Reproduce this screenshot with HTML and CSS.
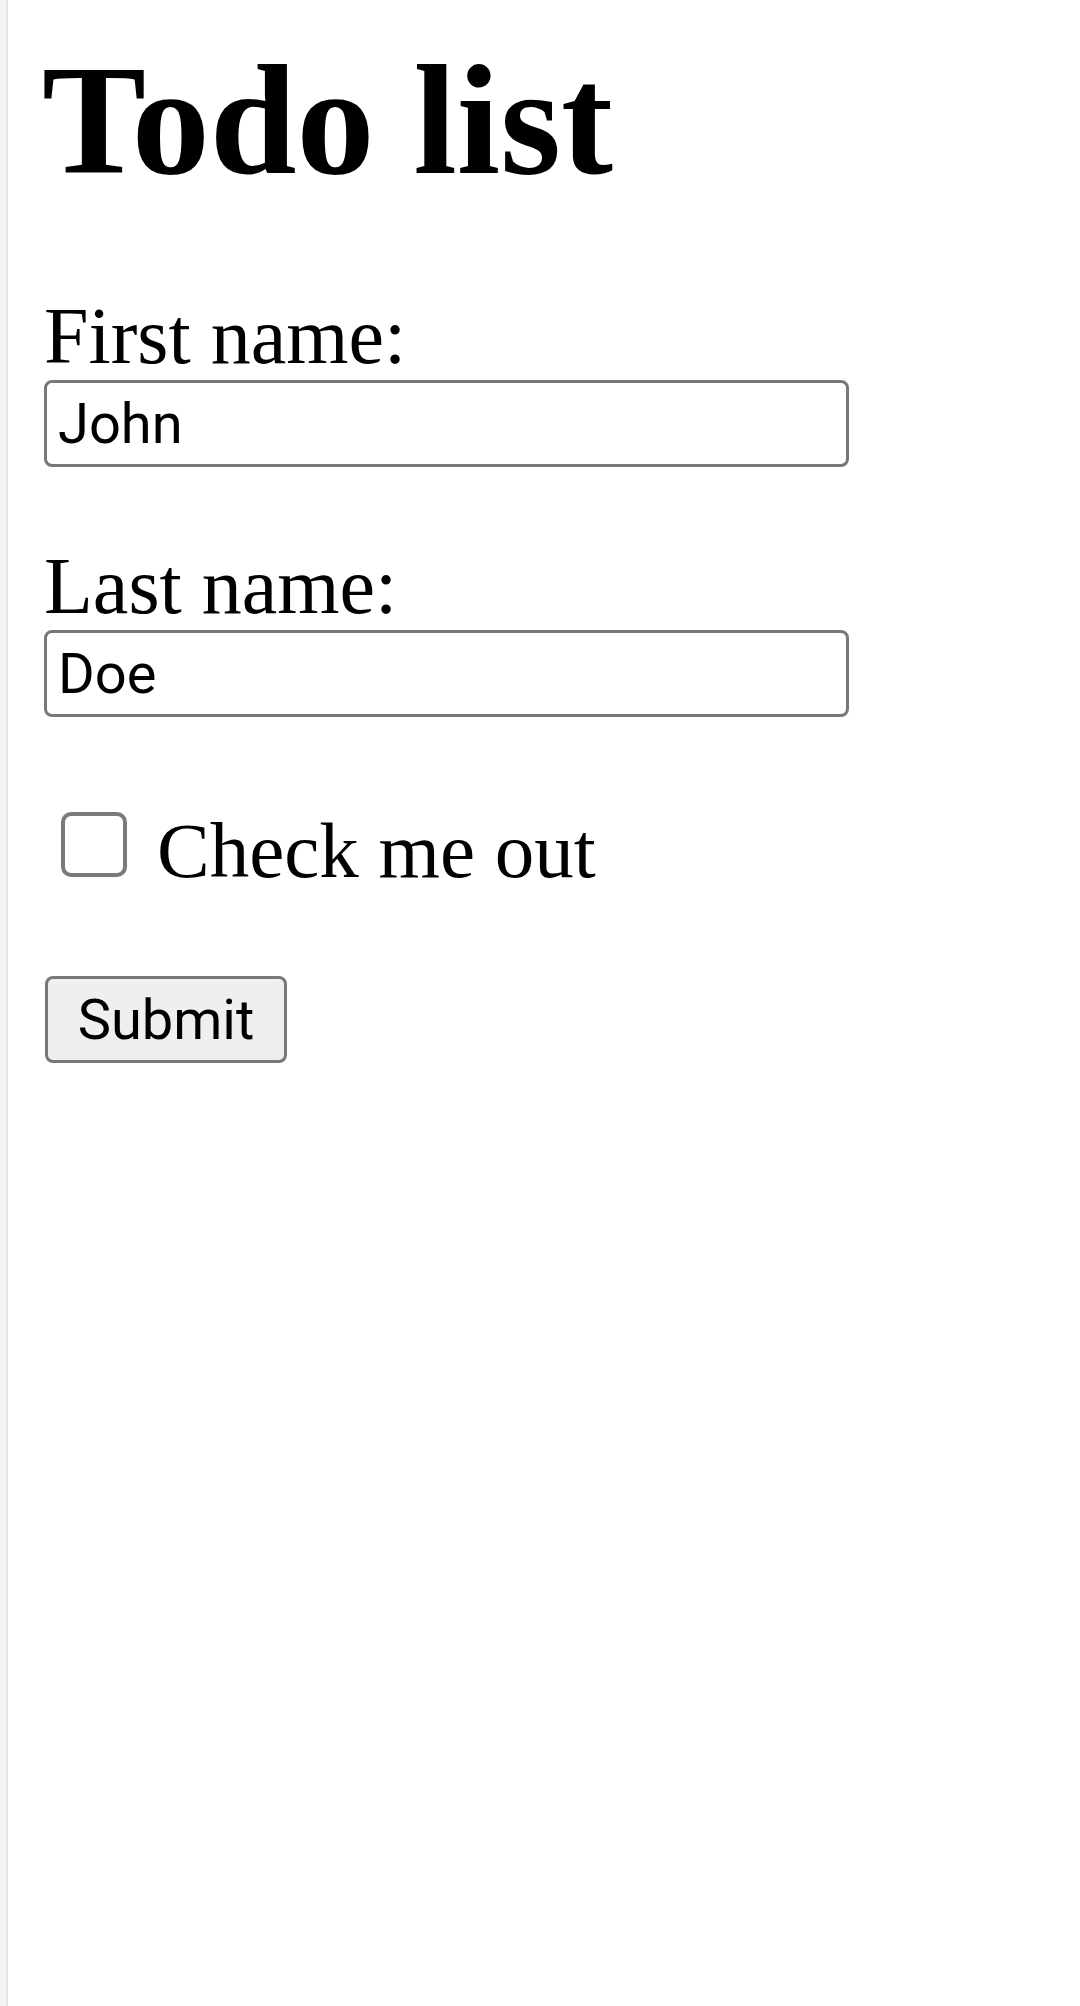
FILE: index.html
```html
<!DOCTYPE html>
<html lang="en">
<head>
<meta charset="utf-8">
<title>Todo list</title>
<link rel="stylesheet" href="styles.css">
</head>
<body>
<div class="page">
  <h1 class="title">Todo list</h1>
  <form class="form">
    <label class="field-label" for="fname">First name:</label>
    <input class="text-input" type="text" id="fname" value="John">
    <label class="field-label second" for="lname">Last name:</label>
    <input class="text-input" type="text" id="lname" value="Doe">
    <div class="check-row">
      <input class="check" type="checkbox" id="check">
      <label class="check-label" for="check">Check me out</label>
    </div>
    <button class="submit" type="button">Submit</button>
  </form>
</div>
</body>
</html>
```

FILE: styles.css
```css
html, body {
  margin: 0;
  padding: 0;
  background: #ffffff;
}

body {
  border-left: 6px solid #f3f3f3;
  min-height: 2006px;
  box-sizing: border-box;
}

.page {
  border-left: 2px solid #e4e4e6;
  min-height: 2006px;
  box-sizing: border-box;
  padding: 43px 0 0 36px;
  font-family: "Liberation Serif", "Times New Roman", serif;
  color: #000;
}

.title {
  margin: 0 0 0 -2px;
  font-size: 156px;
  line-height: 156px;
  font-weight: 700;
}

.form {
  display: flex;
  flex-direction: column;
  align-items: flex-start;
  margin-top: 97px;
}

.field-label {
  font-size: 80px;
  line-height: 80px;
}

.field-label.second {
  margin-top: 79px;
}

.text-input {
  margin-top: 4px;
  width: 805px;
  height: 87px;
  box-sizing: border-box;
  border: 3px solid #787878;
  border-radius: 8px;
  padding: 0 11px;
  font-family: Roboto, "Liberation Sans", sans-serif;
  font-size: 56px;
  color: #000;
  background: #fff;
  outline: none;
}

.check-row {
  display: flex;
  align-items: flex-start;
  margin-top: 94px;
  margin-left: 17px;
}

.check {
  appearance: none;
  -webkit-appearance: none;
  margin: 1px 0 0 0;
  width: 66px;
  height: 65px;
  box-sizing: border-box;
  border: 4px solid #7a7a7a;
  border-radius: 10px;
  background: #fff;
}

.check-label {
  margin-left: 30px;
  font-size: 79px;
  line-height: 80px;
}

.submit {
  margin-top: 85px;
  margin-left: 1px;
  width: 242px;
  height: 87px;
  box-sizing: border-box;
  border: 3px solid #787878;
  border-radius: 8px;
  background: #efefef;
  font-family: Roboto, "Liberation Sans", sans-serif;
  font-size: 56px;
  color: #000;
  padding: 0;
}
```
